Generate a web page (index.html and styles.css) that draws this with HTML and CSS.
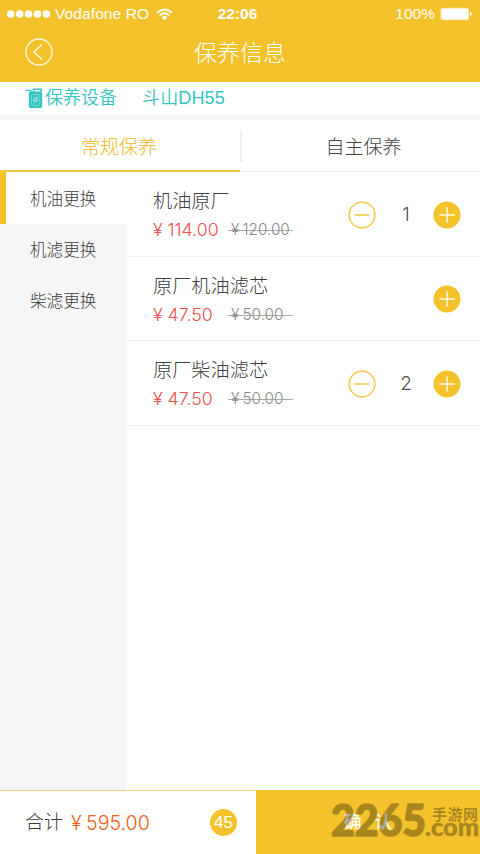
FILE: index.html
```html
<!DOCTYPE html>
<html lang="zh-CN">
<head>
<meta charset="utf-8">
<meta name="viewport" content="width=device-width, initial-scale=1">
<title>保养信息</title>
<link rel="stylesheet" href="styles.css">
</head>
<body>
<svg class="defs" width="0" height="0" aria-hidden="true">
  <symbol id="minus" viewBox="0 0 28 28"><circle cx="14" cy="14" r="12.9" fill="none" stroke="#f4c22b" stroke-width="1.3"/><path d="M6.5 14h15" stroke="#f4c22b" stroke-width="1.4"/></symbol>
  <symbol id="plus" viewBox="0 0 28 28"><circle cx="14" cy="14" r="13.5" fill="#f4c22b"/><path d="M6.3 14h15.4M14 6.3v15.4" stroke="#fffbe8" stroke-width="1.4"/></symbol>
</svg>
<div class="app">
  <header class="header">
    <div class="status">
      <div class="carrier">
        <svg width="44" height="28" viewBox="0 0 44 28" fill="#fff"><circle cx="3.8" cy="14" r="3.8"/><circle cx="12.7" cy="14" r="3.8"/><circle cx="21.6" cy="14" r="3.8"/><circle cx="30.5" cy="14" r="3.8"/><circle cx="39.4" cy="14" r="3.8"/></svg>
        <span class="carrier-name">Vodafone RO</span>
        <svg width="17" height="13" viewBox="0 0 17 13"><path d="M1 4.7Q8.5-1.9 16 4.7M3.7 7.4Q8.5 3.2 13.3 7.4" fill="none" stroke="#fff" stroke-width="1.9"/><path d="M5.6 9.3Q8.5 6.8 11.4 9.3L8.5 12.3z" fill="#fff"/></svg>
      </div>
      <span class="time">22:06</span>
      <div class="battery"><span>100%</span><svg width="32" height="14" viewBox="0 0 32 14"><rect x=".5" y=".7" width="28.5" height="12.6" rx="2.5" fill="#fbe8ae"/><rect x="1.5" y="1.7" width="26.5" height="10.6" rx="1.5" fill="#fff"/><path d="M29.8 4.5q2 .6 2 2.5t-2 2.5z" fill="#fff"/></svg></div>
    </div>
    <div class="titlebar">
      <svg class="back" width="28" height="28" viewBox="0 0 28 28" fill="none" stroke="#fff8dc" stroke-width="1.4"><circle cx="14" cy="14" r="13"/><path d="M16.9 6.2 9 14l7.9 7.8"/></svg>
      <h1>保养信息</h1>
    </div>
  </header>
  <div class="device">
    <svg width="19" height="21" viewBox="0 0 19 21"><path d="M.5 2.3h5.2L7.5 5" stroke="#35c4c1" stroke-width="1.2" fill="none"/><path d="M8.5 3.5V1.2h7.5v3" stroke="#35c4c1" stroke-width="1.6" fill="none"/><rect x="3.8" y="3.4" width="13.4" height="16.6" rx="1.8" fill="#35c4c1"/><rect x="6.5" y="6.5" width="8.2" height="11" rx="1" fill="none" stroke="#91dfdc" stroke-width=".7"/><circle cx="10.6" cy="11.6" r="1.9" fill="none" stroke="#d8f4f3"/><path d="m8 17 5-9" stroke="#91dfdc" stroke-width=".6"/></svg>
    <span class="device-label">保养设备</span><span class="device-model">斗山DH55</span>
  </div>
  <nav class="tabs"><div class="tab active">常规保养</div><div class="tab">自主保养</div></nav>
  <main class="content">
    <aside class="side"><div class="cat selected">机油更换</div><div class="cat">机滤更换</div><div class="cat">柴滤更换</div></aside>
    <section class="list">
      <article class="item">
        <div class="info"><h2>机油原厂</h2><div class="prices"><span class="price"><i>¥</i>114.00</span><s><i>¥</i>120.00</s></div></div>
        <div class="stepper"><svg><use href="#minus"/></svg><b>1</b><svg><use href="#plus"/></svg></div>
      </article>
      <article class="item">
        <div class="info"><h2>原厂机油滤芯</h2><div class="prices"><span class="price"><i>¥</i>47.50</span><s><i>¥</i>50.00</s></div></div>
        <div class="stepper"><svg><use href="#plus"/></svg></div>
      </article>
      <article class="item">
        <div class="info"><h2>原厂柴油滤芯</h2><div class="prices"><span class="price"><i>¥</i>47.50</span><s><i>¥</i>50.00</s></div></div>
        <div class="stepper"><svg><use href="#minus"/></svg><b>2</b><svg><use href="#plus"/></svg></div>
      </article>
    </section>
  </main>
  <footer class="footer">
    <div class="total"><span class="total-label">合计</span><span class="sum"><i>¥</i>595.00</span><span class="count">45</span></div>
    <div class="confirm"><span>确</span><span>认</span>
      <svg class="mark" width="154" height="50" viewBox="0 0 154 50"><g opacity=".3" stroke="#000" stroke-linejoin="round"><text class="mark-num" x="5" y="41" textLength="95" lengthAdjust="spacingAndGlyphs">2265</text><text class="mark-cn" x="106" y="25" textLength="46">手游网</text><text class="mark-com" x="99" y="41" textLength="54" lengthAdjust="spacingAndGlyphs">.com</text></g></svg>
    </div>
  </footer>
</div>
</body>
</html>
```
FILE: styles.css
```css
* { box-sizing: border-box; }
body { margin: 0; font-family: "Liberation Sans", "Noto Sans CJK SC", sans-serif; font-weight: 350; color: #505050; }
.defs { position: absolute; }
svg { display: block; flex: none; }
i { font-style: normal; }
h1, h2 { margin: 0; font-weight: 300; }
.app { width: 480px; height: 854px; display: flex; flex-direction: column; background: #fff; overflow: hidden; }
.header { height: 82px; flex: none; background: #f4c22b; color: #fff; }
.status { height: 28px; display: grid; grid-template-columns: 1fr auto 1fr; align-items: center; padding: 0 8px 0 7px; font-size: 15.5px; line-height: 28px; }
.carrier { display: flex; align-items: center; }
.carrier-name { margin: 0 7px 0 4px; width: 94px; white-space: nowrap; letter-spacing: .1px; }
.time { font-weight: bold; font-size: 15.5px; margin-left: -4px; }
.battery { display: flex; align-items: center; justify-content: flex-end; gap: 5px; }
.titlebar { height: 48px; display: grid; grid-template-columns: 28px 1fr 28px; align-items: center; padding: 0 25px; }
h1 { font-family: "Noto Sans CJK SC", sans-serif; font-size: 23px; line-height: 46px; height: 48px; text-align: center; }
.device { height: 32px; flex: none; display: flex; align-items: center; padding-left: 25px; font-size: 18px; line-height: 32px; color: #35c4c1; white-space: nowrap; }
.device > span { height: 32px; }
.device-label { margin-left: 1px; width: 97px; }
.device-model { letter-spacing: .15px; }
.tabs { height: 58px; flex: none; border-top: 6px solid #f6f6f6; display: flex; }
.tab { width: 240px; border-bottom: 1px solid #f1f1f1; text-align: center; font-size: 19px; font-weight: 300; color: #444; line-height: 55px; padding-left: 7px; position: relative; }
.tab.active { color: #f4b822; border-bottom: 2px solid #f1c644; padding: 0 2px 0 0; }
.tab.active::after { content: ""; position: absolute; right: -2px; top: 10px; width: 2px; height: 32px; background: #eee; }
.content { flex: 1; display: flex; }
.side { width: 127px; background: #f6f6f6; font-weight: 300; color: #3c3c3c; }
.cat { height: 51px; padding-left: 30px; font-size: 16.6px; line-height: 53px; }
.cat.selected { height: 52px; border-left: 6px solid #f4c22b; padding-left: 24px; line-height: 55px; background: #fff; }
.list { flex: 1; }
.item { height: 84.6px; border-bottom: 1px solid #f1f1f1; display: flex; justify-content: space-between; padding: 15px 19px 0 26px; }
h2 { font-size: 19.2px; line-height: 29px; height: 28px; color: #3c3c3c; }
.prices { display: flex; align-items: center; height: 29px; line-height: 29px; white-space: nowrap; font-family: Inter, "Liberation Sans", sans-serif; font-weight: 300; }
.price { color: #ef5050; font-size: 17.8px; width: 75px; }
.price i { display: inline-block; width: 14.5px; }
s { font-size: 15.3px; color: #888; width: 65px; display: block; text-decoration: none; background: linear-gradient(#aaa, #aaa) 0 15px / 100% 1px no-repeat; }
s i { display: inline-block; width: 14.5px; padding-left: 3px; }
.stepper { display: flex; align-items: center; height: 55px; font-family: Inter, "Liberation Sans", sans-serif; }
.stepper svg { width: 28px; height: 28px; }
.stepper b { width: 57px; text-align: center; padding-left: 3px; font-size: 19px; font-weight: 300; }
.footer { height: 64px; flex: none; display: flex; }
.total { width: 256px; border-top: 1px solid #f2d98b; display: flex; align-items: center; padding: 0 19px 0 25px; font-size: 19.6px; }
.total-label { font-size: 19px; line-height: 32px; height: 32px; font-weight: 300; color: #3c3c3c; }
.sum { color: #ed6018; margin-left: 8px; font-family: Inter, "Liberation Sans", sans-serif; font-weight: 300; }
.sum i { display: inline-block; width: 15px; }
.count { width: 27px; height: 27px; margin-left: auto; border-radius: 50%; background: #f4c22b; color: #fff; font-size: 17px; line-height: 27px; text-align: center; }
.confirm { flex: 1; background: #f4c22b; color: #fff; display: flex; justify-content: center; gap: 13px; font-size: 17.5px; font-weight: 500; line-height: 64px; position: relative; }
.mark { position: absolute; right: 0; top: 5px; }
.mark-num { font: 900 44px Lato, sans-serif; stroke-width: 1.6px; }
.mark-cn { font: bold 15px "Noto Sans CJK SC", sans-serif; stroke: none; }
.mark-com { font: 900 24px Lato, sans-serif; stroke-width: .5px; }
```
